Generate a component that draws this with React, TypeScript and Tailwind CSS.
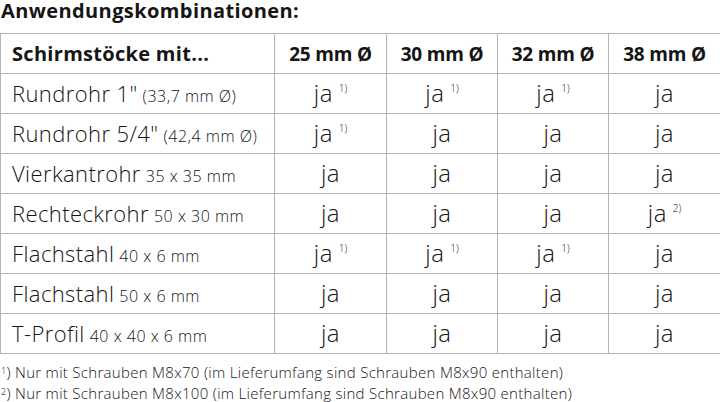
import React from "react";

type Row = { name: string; dim: string; cells: (string | null)[] };

const rows: Row[] = [
  { name: "Rundrohr 1\"", dim: "(33,7 mm Ø)", cells: ["1)", "1)", "1)", null] },
  { name: "Rundrohr 5/4\"", dim: "(42,4 mm Ø)", cells: ["1)", null, null, null] },
  { name: "Vierkantrohr", dim: "35 x 35 mm", cells: [null, null, null, null] },
  { name: "Rechteckrohr", dim: "50 x 30 mm", cells: [null, null, null, "2)"] },
  { name: "Flachstahl", dim: "40 x 6 mm", cells: ["1)", "1)", "1)", null] },
  { name: "Flachstahl", dim: "50 x 6 mm", cells: [null, null, null, null] },
  { name: "T-Profil", dim: "40 x 40 x 6 mm", cells: [null, null, null, null] },
];

const heads = ["25 mm Ø", "30 mm Ø", "32 mm Ø", "38 mm Ø"];

const font = { fontFamily: "'Open Sans', Lato, sans-serif" };

export default function App() {
  return (
    <div className="w-[720px] h-[402px] bg-white text-[#151515] overflow-hidden" style={font}>
      {/* title */}
      <div className="h-[33px] pt-[1px]">
        <h1 className="pl-[1px] text-[20px] font-bold leading-[20px] tracking-[0.4px]">
          Anwendungskombinationen:
        </h1>
      </div>

      <div className="w-[720px] grid grid-cols-[274px_112px_111px_111px_112px] border-t border-l border-[#b4b4b4]">
        <div className="h-[40px] flex items-center pl-[11px] pt-[1px] border-r border-b border-[#b4b4b4] text-[20px] font-bold tracking-[0.3px]">
          Schirmstöcke mit...
        </div>
        {heads.map((h) => (
          <div
            key={h}
            className="h-[40px] flex items-center justify-center pt-[1px] border-r border-b border-[#b4b4b4] text-[19px] font-bold tracking-[-0.2px]"
          >
            {h}
          </div>
        ))}

        {rows.map((r, i) => (
          <React.Fragment key={i}>
            <div className="h-[40px] flex items-baseline pl-[11px] pt-[6px] border-r border-b border-[#b4b4b4] font-light whitespace-nowrap">
              <span className="text-[22px] leading-[26px] tracking-[0.4px]">{r.name}</span>
              <span className="ml-[5px] text-[16px] tracking-[0.5px]">{r.dim}</span>
            </div>
            {r.cells.map((c, j) => (
              <div
                key={j}
                className="h-[40px] flex items-baseline justify-center pt-[6px] border-r border-b border-[#b4b4b4] font-light"
              >
                <span className="text-[24px] leading-[26px] tracking-[0.5px]">ja</span>
                {c && <span className="ml-[6px] text-[10px] relative -top-[10px]">{c}</span>}
              </div>
            ))}
          </React.Fragment>
        ))}
      </div>

      <div className="pt-[8px] pl-[1px] text-[15px] leading-[21px] font-light tracking-[0.3px]">
        <p>
          <sup className="text-[9px]">1</sup>) Nur mit Schrauben M8x70 (im Lieferumfang sind Schrauben M8x90 enthalten)
        </p>
        <p>
          <sup className="text-[9px]">2</sup>) Nur mit Schrauben M8x100 (im Lieferumfang sind Schrauben M8x90 enthalten)
        </p>
      </div>
    </div>
  );
}
